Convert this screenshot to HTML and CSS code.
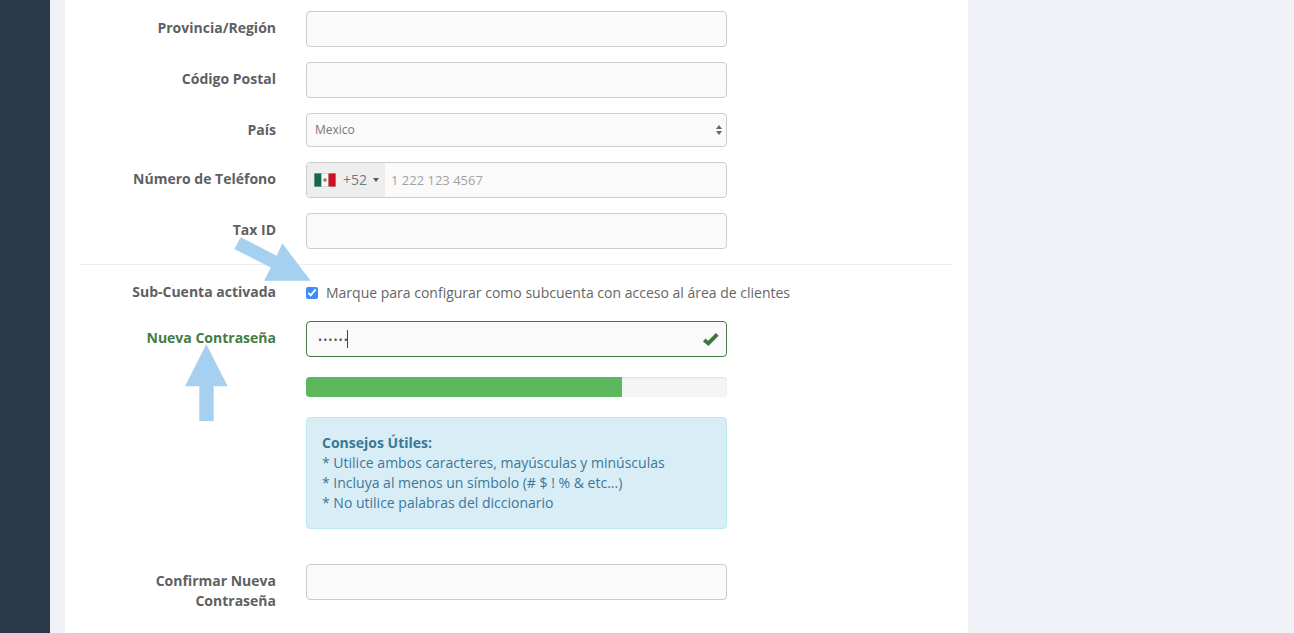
FILE: index.html
```html
<!DOCTYPE html>
<html lang="es">
<head>
<meta charset="utf-8">
<title>Sub-Cuenta</title>
<link rel="stylesheet" href="styles.css">
</head>
<body>
<div class="shell">
  <aside class="sidebar"></aside>
  <main class="content">
    <form class="panel">
      <div class="row">
        <label class="label">Provincia/Región</label>
        <div class="field"><input class="control" type="text"></div>
      </div>
      <div class="row">
        <label class="label">Código Postal</label>
        <div class="field"><input class="control" type="text"></div>
      </div>
      <div class="row">
        <label class="label">País</label>
        <div class="field select-wrap">
          <select class="control select"><option>Mexico</option></select>
          <svg class="select-arrows" width="8" height="12" viewBox="0 0 8 12"><path d="M4 1 7 5H1zM4 11 1 7h6z" fill="#666"/></svg>
        </div>
      </div>
      <div class="row">
        <label class="label">Número de Teléfono</label>
        <div class="field phone">
          <div class="dial">
            <svg class="flag" width="22" height="14" viewBox="0 0 22 14">
              <rect width="22" height="14" fill="#bbb"/>
              <rect x=".5" y=".5" width="7" height="13" fill="#0f6b47"/>
              <rect x="7.5" y=".5" width="7" height="13" fill="#f7f7f7"/>
              <rect x="14.5" y=".5" width="7" height="13" fill="#ce1126"/>
              <circle cx="11" cy="7" r="1.8" fill="#9a7b4f"/>
            </svg>
            <span class="code">+52</span>
            <span class="caret"></span>
          </div>
          <input class="phone-input" type="text" placeholder="1 222 123 4567">
        </div>
      </div>
      <div class="row">
        <label class="label">Tax ID</label>
        <div class="field"><input class="control" type="text"></div>
      </div>
      <hr class="rule">
      <div class="row row-check">
        <label class="label label-check">Sub-Cuenta activada</label>
        <label class="check-line"><input class="check" type="checkbox" checked>Marque para configurar como subcuenta con acceso al área de clientes</label>
      </div>
      <div class="row row-password">
        <label class="label label-ok">Nueva Contraseña</label>
        <div class="field stack">
          <div class="pass-wrap">
            <input class="control control-ok" type="password" value="xxxxxx">
            <span class="text-cursor"></span>
            <svg class="ok-icon" width="16" height="14" viewBox="0 0 16 14"><path d="M1.2 8 5.3 11.4 14.3 2.4" fill="none" stroke="#3c763d" stroke-width="3.8"/></svg>
          </div>
          <div class="progress"><div class="progress-bar" style="width:75%"></div></div>
          <div class="alert">
            <strong>Consejos Útiles:</strong><br>
            * Utilice ambos caracteres, mayúsculas y minúsculas<br>
            * Incluya al menos un símbolo (# $ ! % &amp; etc...)<br>
            * No utilice palabras del diccionario
          </div>
        </div>
      </div>
      <div class="row">
        <label class="label">Confirmar Nueva Contraseña</label>
        <div class="field"><input class="control" type="password"></div>
      </div>
    </form>
  </main>
</div>
<svg class="arrows" width="1294" height="633" viewBox="0 0 1294 633">
  <path d="M240.7 237.3 276.7 255.7 282.3 243.3 310.7 280.7H264L270.9 267.5 234.3 249Z" fill="#a5d0f0"/>
  <path d="M206.3 344.3 227.7 386.3H213.7V421H199.3V386.3H185Z" fill="#a5d0f0"/>
</svg>
</body>
</html>
```
FILE: styles.css
```css
* { box-sizing: border-box; }
html, body { margin: 0; height: 100%; overflow: hidden; }
body {
  background: #f0f2f7;
  font-family: "Open Sans", sans-serif;
  font-size: 14px;
  line-height: 20px;
  color: #5f6062;
}
.shell { display: flex; height: 633px; }
.sidebar { width: 50px; background: #2a3a4b; flex: none; }
.content { padding-left: 15px; flex: none; }
.panel {
  width: 903px;
  height: 633px;
  background: #fff;
  padding: 11px 15px 0;
  overflow: hidden;
}
.row {
  display: grid;
  grid-template-columns: 196px 421px;
  column-gap: 30px;
  margin-bottom: 15px;
}
.label {
  padding-top: 7px;
  text-align: right;
  font-weight: 700;
}
.field { position: relative; }
.control {
  display: block;
  width: 100%;
  height: 36px;
  padding: 6px 8px;
  background: #fafafa;
  border: 1px solid #ccc;
  border-radius: 4px;
  font: 14px/20px "Open Sans", sans-serif;
  color: #777;
  outline: none;
}
.select {
  height: 34px;
  appearance: none;
  font-size: 12px;
}
.select-arrows { position: absolute; right: 4px; top: 11px; }
.phone {
  display: flex;
  height: 36px;
  border: 1px solid #ccc;
  border-radius: 4px;
  background: #fafafa;
  overflow: hidden;
}
.dial {
  display: flex;
  align-items: center;
  flex: none;
  width: 78px;
  padding-left: 7px;
  background: #eee;
}
.flag { flex: none; }
.code { margin-left: 7px; color: #777; }
.caret {
  margin-left: 6px;
  border-left: 3px solid transparent;
  border-right: 3px solid transparent;
  border-top: 4px solid #555;
}
.phone-input {
  flex: 1;
  min-width: 0;
  padding: 0 6px;
  border: 0;
  background: transparent;
  font: 13px "Open Sans", sans-serif;
  outline: none;
}
.phone-input::placeholder { color: #a3a3a3; opacity: 1; }
.rule {
  height: 1px;
  margin: 0;
  border: 0;
  background: #eee;
}
.row-check { margin: 18px 0; align-items: center; height: 20px; }
.label-check { padding-top: 0; position: relative; top: -1px; }
.check-line { display: flex; align-items: center; white-space: nowrap; color: #666; }
.check {
  width: 12px;
  height: 12px;
  margin: 0 8px 0 0;
  accent-color: #3a8dfa;
  flex: none;
}
.label-ok { color: #437c45; }
.stack { display: flex; flex-direction: column; }
.pass-wrap { position: relative; }
.control-ok {
  border-color: #447a47;
  padding-left: 11px;
  font-size: 11px;
  letter-spacing: 1px;
  color: #555;
}
.text-cursor {
  position: absolute;
  left: 41px;
  top: 9px;
  width: 1px;
  height: 18px;
  background: #444;
}
.ok-icon { position: absolute; right: 8px; top: 11px; }
.progress {
  height: 20px;
  margin-top: 20px;
  background: #f5f5f5;
  border-radius: 4px;
  box-shadow: inset 0 1px 2px rgba(0, 0, 0, .1);
  overflow: hidden;
}
.progress-bar { height: 100%; background: #5cb85c; }
.alert {
  margin-top: 20px;
  padding: 15px;
  background: #d9edf7;
  border: 1px solid #bce8f1;
  border-radius: 4px;
  color: #3a7896;
}
.row-password { margin-bottom: 35px; }
.arrows { position: absolute; left: 0; top: 0; pointer-events: none; }
```
